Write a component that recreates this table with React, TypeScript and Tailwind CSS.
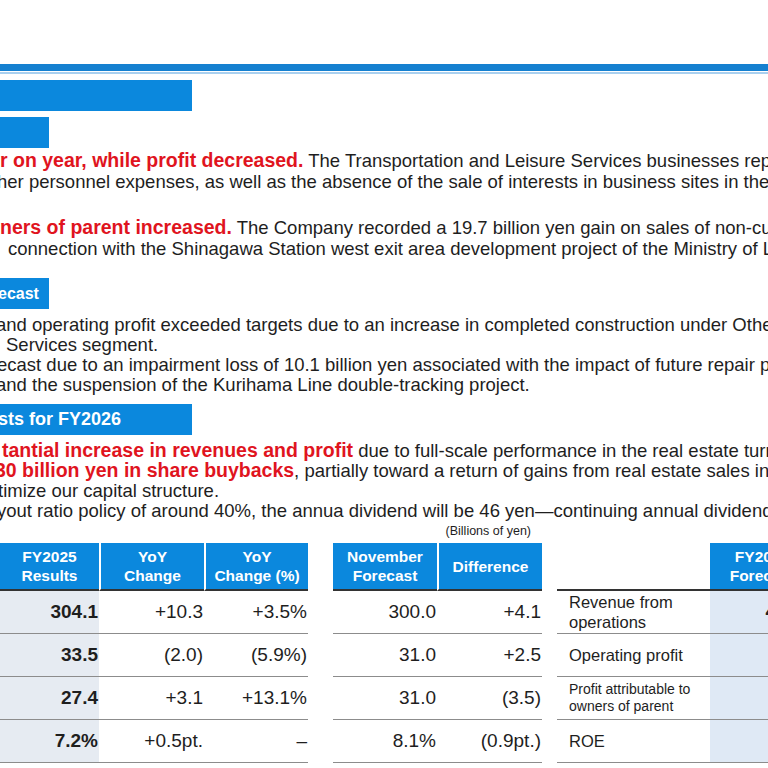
import React from "react";

const red = "text-[#e0141e] font-bold text-[19.5px] leading-none";

function Line({ children, className = "" }: { children: React.ReactNode; className?: string }) {
  return <div className={`whitespace-nowrap ${className}`}>{children}</div>;
}

function SectionTag({ width, children }: { width: string; children?: React.ReactNode }) {
  return (
    <div className={`${width} h-[31px] bg-[#0b88dd] text-white font-bold flex items-center whitespace-nowrap overflow-hidden`}>
      {children}
    </div>
  );
}

const head = "bg-[#0b88dd] text-white font-bold text-[15.5px] leading-[19px] text-center flex items-center justify-center border-b-2 border-[#333]";
const spacer = "";
const num = "flex items-center justify-end pr-px text-[19px] border-b border-[#8c8c8c]";
const label = "flex items-center pl-3 border-b border-[#8c8c8c] whitespace-pre-line";

const rows = [
  { a: "304.1", b: "+10.3", c: "+3.5%", d: "300.0", e: "+4.1", label: "Revenue from\noperations", small: false, f: "400.0" },
  { a: "33.5", b: "(2.0)", c: "(5.9%)", d: "31.0", e: "+2.5", label: "Operating profit", small: false, f: "35.0" },
  { a: "27.4", b: "+3.1", c: "+13.1%", d: "31.0", e: "(3.5)", label: "Profit attributable to\nowners of parent", small: true, f: "30.0" },
  { a: "7.2%", b: "+0.5pt.", c: "–", d: "8.1%", e: "(0.9pt.)", label: "ROE", small: false, f: "8.0%" },
];

export default function App() {
  return (
    <div className="w-[768px] h-[768px] overflow-hidden bg-white text-[#1e1e1e] font-['Liberation_Sans',Arial,sans-serif]">
      <div className="h-[64px]" />
      <div className="h-[7px] bg-[#1580d0]" />
      <div className="h-[2px] mt-px bg-[#a9d0ef]" />
      <div className="h-[6px]" />

      <SectionTag width="w-[192px]" />
      <div className="h-[6px]" />
      <SectionTag width="w-[49px]" />

      <div className="text-[18.5px] leading-[21px] mt-[2px]">
        <Line className="h-[21px]">
          <span className={red}>r on year, while profit decreased.</span> The Transportation and Leisure Services businesses reported
        </Line>
        <Line className="h-[21px] -ml-[3px]">
          her personnel expenses, as well as the absence of the sale of interests in business sites in the
        </Line>
        <Line className="h-[21px] mt-[25px]">
          <span className={red}>ners of parent increased.</span> The Company recorded a 19.7 billion yen gain on sales of non-current
        </Line>
        <Line className="h-[21px] pl-[8px]">
          connection with the Shinagawa Station west exit area development project of the Ministry of Land
        </Line>
      </div>

      <div className="h-[19px]" />
      <SectionTag width="w-[49px]">
        <span className="text-[16px] -ml-[2px]">ecast</span>
      </SectionTag>

      <div className="text-[18.5px] leading-[20px] mt-[6px]">
        <Line className="h-[20px] -ml-[4px]">
          and operating profit exceeded targets due to an increase in completed construction under Other
        </Line>
        <Line className="h-[20px] pl-[6px]">Services segment.</Line>
        <Line className="h-[20px] -ml-[3px]">
          ecast due to an impairment loss of 10.1 billion yen associated with the impact of future repair plans
        </Line>
        <Line className="h-[20px] -ml-[4px]">and the suspension of the Kurihama Line double-tracking project.</Line>
      </div>

      <div className="h-[9px]" />
      <SectionTag width="w-[192px]">
        <span className="text-[18px] -ml-[2px]">sts for FY2026</span>
      </SectionTag>

      <div className="text-[18.5px] leading-[20px] mt-[6px]">
        <Line className="h-[20px] pl-[2px]">
          <span className={red}>tantial increase in revenues and profit</span> due to full-scale performance in the real estate turnover
        </Line>
        <Line className="h-[20px] -ml-[5px]">
          <span className={red}>30 billion yen in share buybacks</span>, partially toward a return of gains from real estate sales in
        </Line>
        <Line className="h-[20px] -ml-[2px]">timize our capital structure.</Line>
        <Line className="h-[20px] -ml-[3px]">
          yout ratio policy of around 40%, the annua dividend will be 46 yen—continuing annual dividend
        </Line>
      </div>

      <div className="w-[531px] text-right text-[12.5px] leading-[14px] mt-[3px]">(Billions of yen)</div>

      <div className="mt-[5px] grid grid-cols-[99px_105px_104px_25px_104px_105px_15px_153px_104px] grid-rows-[48px_43px_43px_43px_43px]">
        <div className={head}>FY2025<br />Results</div>
        <div className={`${head} border-l-2 border-l-white`}>YoY<br />Change</div>
        <div className={`${head} border-l-2 border-l-white`}>YoY<br />Change (%)</div>
        <div className={spacer} />
        <div className={head}>November<br />Forecast</div>
        <div className={`${head} border-l-2 border-l-white`}>Difference</div>
        <div className={spacer} />
        <div className="border-b-2 border-[#333]" />
        <div className={head}>FY2026<br />Forecast</div>

        {rows.map((r) => (
          <React.Fragment key={r.d + r.e}>
            <div className={`${num} bg-[#e6ebf2] font-bold`}>{r.a}</div>
            <div className={num}>{r.b}</div>
            <div className={num}>{r.c}</div>
            <div className={spacer} />
            <div className={num}>{r.d}</div>
            <div className={num}>{r.e}</div>
            <div className={spacer} />
            <div className={r.small ? `${label} text-[14px] leading-[17px]` : `${label} text-[16.5px] leading-[20px]`}>{r.label}</div>
            <div className={`${num} bg-[#dfe9f5] font-bold pr-[10px]`}>{r.f}</div>
          </React.Fragment>
        ))}
      </div>
    </div>
  );
}
